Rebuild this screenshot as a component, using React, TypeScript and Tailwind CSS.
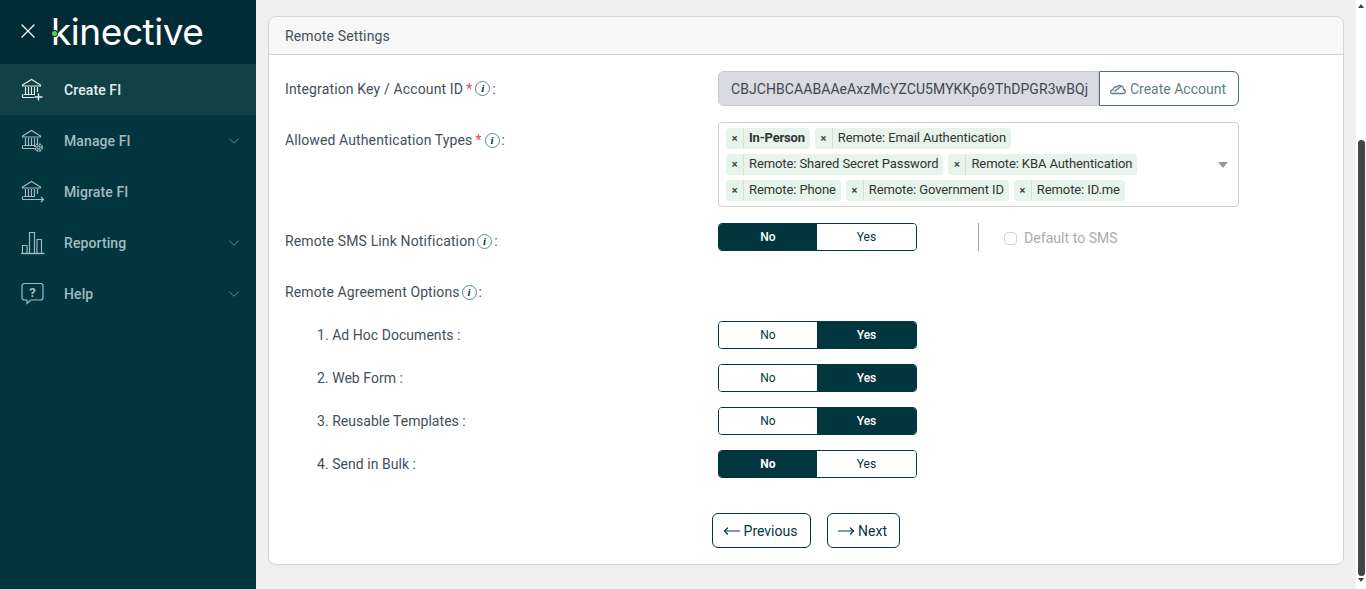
import React from "react"
import { ChevronDown, MoveLeft, MoveRight, X } from "lucide-react"

function Bank({ children }: { children?: React.ReactNode }) {
    return (
        <svg width="24" height="24" viewBox="0 0 24 24" fill="none" stroke="currentColor" strokeWidth="1.15">
            <path d="M1.5 7 L10.5 1.5 L19.5 7 V8 H1.5 Z" />
            <path d="M4.5 9 V16 M7.5 9 V16 M10.5 9 V16 M13.5 9 V16 M16.5 9 V14" />
            <path d="M2.5 16.5 H14 M1.5 19.5 H13 M1.5 16.5 V19.5" />
            {children}
        </svg>
    )
}

function CreateIcon() {
    return (
        <Bank>
            <path d="M17.5 15.5 V22.5 M13.5 19 H21.5" strokeWidth="1.4" />
        </Bank>
    )
}

function ManageIcon() {
    return (
        <Bank>
            <circle cx="17.5" cy="18.5" r="1.6" />
            <circle cx="17.5" cy="18.5" r="3.6" strokeDasharray="2 0.85" strokeWidth="1.6" />
        </Bank>
    )
}

function MigrateIcon() {
    return (
        <Bank>
            <path d="M13 19.5 H22.5 M20 17 L22.5 19.5 L20 22" />
        </Bank>
    )
}

function ReportingIcon() {
    return (
        <svg width="24" height="24" viewBox="0 0 24 24" fill="none" stroke="currentColor" strokeWidth="1.15">
            <path d="M0 22.5 H23.5" strokeWidth="1.4" />
            <path d="M1.5 22 V14.5 H6 V22 M8.5 22 V1.5 H13.5 V22 M16 22 V8.5 H20.5 V22" />
        </svg>
    )
}

function HelpIcon() {
    return (
        <svg width="24" height="24" viewBox="0 0 24 24" fill="none" stroke="currentColor" strokeWidth="1.15">
            <path d="M3.5 1.5 H19.5 a2.5 2.5 0 0 1 2.5 2.5 V15.5 a2.5 2.5 0 0 1 -2.5 2.5 H10 L6 21.5 V18 H3.5 A2.5 2.5 0 0 1 1 15.5 V4 A2.5 2.5 0 0 1 3.5 1.5 Z" />
            <text x="11.5" y="14.5" textAnchor="middle" fontSize="13" fontWeight="700" fill="currentColor" stroke="none" fontFamily="Roboto, sans-serif">?</text>
        </svg>
    )
}

function InfoIcon() {
    return (
        <span className="inline-flex h-[15px] w-[15px] items-center justify-center rounded-full border border-[#5d8a94] font-['Liberation_Serif',serif] text-[11px] leading-none font-bold text-[#02363f] italic">
            i
        </span>
    )
}

function CloudIcon() {
    return (
        <svg width="16" height="16" viewBox="0 0 16 16" fill="none" stroke="currentColor" strokeWidth="1.3">
            <path d="M2.5 12.5 H13 a2 2 0 0 0 0.5 -4 a3.8 3.8 0 0 0 -6.8 -2.5 a3 3 0 0 0 -3.7 3 a1.8 1.8 0 0 0 -1 3.5 Z" />
            <path d="M4.5 10.5 L11.5 5" />
        </svg>
    )
}

function NavItem({ icon, label, active, chevron }: { icon: React.ReactNode; label: string; active?: boolean; chevron?: boolean }) {
    return (
        <div className={`flex h-[51px] items-center pr-[13px] pl-[21px] ${active ? "bg-[#114047] text-[#e3eeee]" : "text-[#a3bcc0]"}`}>
            <span className="flex w-[43px] shrink-0 items-center">{icon}</span>
            <span className="flex-1 text-sm font-medium tracking-[0.1px]">{label}</span>
            {chevron && <ChevronDown className="h-[18px] w-[18px] text-[#7f9ea3]" strokeWidth={1} />}
        </div>
    )
}

function Toggle({ value, strong }: { value: "No" | "Yes"; strong?: boolean }) {
    const on = `bg-[#02363f] text-white ${strong ? "font-bold" : "font-medium"}`
    const off = "bg-white font-normal text-[#02363f]"
    return (
        <div className="flex h-7 w-[199px] overflow-hidden rounded border border-[#02363f] text-xs">
            <div className={`flex w-[98px] items-center justify-center ${value === "No" ? on : off}`}>No</div>
            <div className={`flex flex-1 items-center justify-center ${value === "Yes" ? on : off}`}>Yes</div>
        </div>
    )
}

function Chip({ label, bold }: { label: string; bold?: boolean }) {
    return (
        <span className="flex h-[21px] items-center rounded-sm bg-[#e6f4ec] text-[13px] tracking-[-0.1px] text-[#333]">
            <span className="flex h-full w-[18px] items-center justify-center border-r border-[#cfe3d6] text-[11px] font-bold text-[#444]">×</span>
            <span className={`pr-[5px] pl-[5px] ${bold ? "font-bold tracking-[-0.2px]" : ""}`}>{label}</span>
        </span>
    )
}

function AgreementRow({ label, value, strong }: { label: string; value: "No" | "Yes"; strong?: boolean }) {
    return (
        <div className="flex items-center tracking-[0.04px]">
            <div className="w-[433px] pl-8">{label} :</div>
            <Toggle value={value} strong={strong} />
        </div>
    )
}

export default function App() {
    return (
        <div className="flex h-[589px] w-[1366px] overflow-hidden bg-[#f0f0f0] font-['Roboto',sans-serif] text-sm text-[#444f5a]">
            <aside className="flex w-[256px] shrink-0 flex-col bg-[#02363f]">
                <div className="flex h-16 items-center bg-[#022c35] pb-[2px] pl-4 text-white">
                    <X className="h-6 w-6" strokeWidth={1.25} />
                    <div className="relative ml-[11px] font-['Inter',sans-serif] text-[37px] leading-none font-normal tracking-[-0.45px]">
                        kinective
                        <span className="absolute top-[18px] left-[1px] h-[5px] w-[5px] rounded-full bg-[#5fd34a] ring-1 ring-[#022c35]" />
                    </div>
                </div>
                <NavItem icon={<CreateIcon />} label="Create FI" active />
                <NavItem icon={<ManageIcon />} label="Manage FI" chevron />
                <NavItem icon={<MigrateIcon />} label="Migrate FI" />
                <NavItem icon={<ReportingIcon />} label="Reporting" chevron />
                <NavItem icon={<HelpIcon />} label="Help" chevron />
            </aside>

            <main className="min-w-0 flex-1 pt-4 pr-3 pl-3">
                <section className="h-[549px] rounded-lg border border-[#d4d4d4] bg-white">
                    <h2 className="flex h-[38px] items-center rounded-t-lg border-b border-[#d4d4d4] bg-[#f7f7f7] px-4 text-sm font-normal tracking-[0.13px]">Remote Settings</h2>
                    <div className="px-4 pt-4">
                        <div className="flex">
                            <label className="flex h-[35px] w-[433px] items-center gap-[2px] tracking-[0.14px]">
                                Integration Key / Account ID <span className="mx-px text-[#e5484d]">*</span> <InfoIcon /> <span>:</span>
                            </label>
                            <div className="flex h-[35px] w-[521px]">
                                <div className="flex flex-1 items-center rounded-l-md border border-[#c6c9ce] bg-[#d9dbe0] pl-3 tracking-[0.07px] text-[#3f4852]">
                                    CBJCHBCAABAAeAxzMcYZCU5MYKKp69ThDPGR3wBQj
                                </div>
                                <button className="flex w-[140px] items-center justify-center gap-1 rounded-r-md border border-[#4b7077] bg-white pr-[2px] text-[#5f7f85]">
                                    <CloudIcon /> Create Account
                                </button>
                            </div>
                        </div>

                        <div className="mt-4 flex">
                            <label className="flex h-9 w-[433px] items-center gap-[2px] tracking-[0.11px]">
                                Allowed Authentication Types <span className="mx-px text-[#e5484d]">*</span> <InfoIcon /> <span>:</span>
                            </label>
                            <div className="flex h-[85px] w-[521px] items-center rounded border border-[#d0d0d0] pr-[10px] pl-[7px]">
                                <div className="flex w-[480px] flex-wrap gap-[5px]">
                                    <Chip label="In-Person" bold />
                                    <Chip label="Remote: Email Authentication" />
                                    <Chip label="Remote: Shared Secret Password" />
                                    <Chip label="Remote: KBA Authentication" />
                                    <Chip label="Remote: Phone" />
                                    <Chip label="Remote: Government ID" />
                                    <Chip label="Remote: ID.me" />
                                </div>
                                <span className="ml-auto h-0 w-0 border-x-[5px] border-t-[6px] border-x-transparent border-t-[#999]" />
                            </div>
                        </div>

                        <div className="mt-4 flex">
                            <label className="flex h-9 w-[433px] items-center gap-[2px] tracking-[0.14px]">
                                Remote SMS Link Notification <InfoIcon /> <span>:</span>
                            </label>
                            <Toggle value="No" />
                            <div className="ml-[61px] h-7 border-l border-[#9aa5a8]" />
                            <label className="ml-[25px] flex h-7 items-center gap-[7px] pt-[2px] tracking-[0.05px] text-[#a9adb1]">
                                <span className="h-[13px] w-[13px] rounded-sm border border-[#d5d5d5] bg-white" />
                                Default to SMS
                            </label>
                        </div>

                        <label className="mt-[22px] flex h-[22px] items-center gap-[2px] tracking-[0.1px]">
                            Remote Agreement Options <InfoIcon /> <span>:</span>
                        </label>

                        <div className="mt-[18px] flex flex-col gap-[15px]">
                            <AgreementRow label="1. Ad Hoc Documents" value="Yes" />
                            <AgreementRow label="2. Web Form" value="Yes" />
                            <AgreementRow label="3. Reusable Templates" value="Yes" />
                            <AgreementRow label="4. Send in Bulk" value="No" strong />
                        </div>

                        <div className="mt-[35px] ml-[427px] flex gap-4 text-[#02363f]">
                            <button className="flex h-[35px] w-[99px] items-center justify-center gap-[3px] rounded-md border border-[#02363f] pr-[3px]">
                                <MoveLeft className="h-[18px] w-[18px]" strokeWidth={1.6} /> Previous
                            </button>
                            <button className="flex h-[35px] w-[73px] items-center justify-center gap-[3px] rounded-md border border-[#02363f] pr-[3px]">
                                <MoveRight className="h-[18px] w-[18px]" strokeWidth={1.6} /> Next
                            </button>
                        </div>
                    </div>
                </section>
            </main>

            <div className="flex w-[10px] shrink-0 flex-col items-center bg-white pt-1">
                <span className="h-0 w-0 border-x-[3px] border-b-[4px] border-x-transparent border-b-[#444]" />
                <div className="mt-[132px] h-[436px] w-[7px] rounded-sm bg-[#444]" />
                <span className="mt-[2px] h-0 w-0 border-x-[3px] border-t-[4px] border-x-transparent border-t-[#444]" />
            </div>
        </div>
    )
}
